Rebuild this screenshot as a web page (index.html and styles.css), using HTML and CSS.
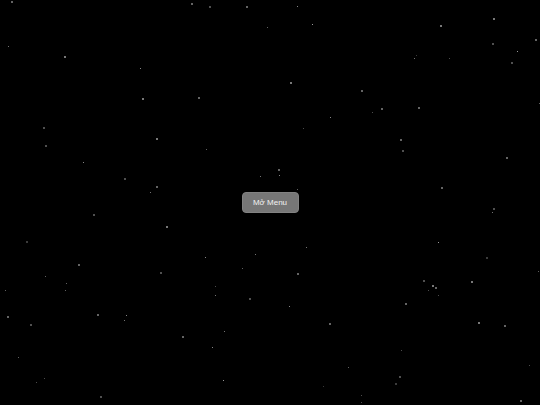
FILE: index.html
```html
<!DOCTYPE html>
<html lang="vi">
<head>
<meta charset="utf-8">
<title>Menu</title>
<link rel="stylesheet" href="styles.css">
</head>
<body>
<div class="sky">
  <div class="stars" id="stars"></div>
  <div class="center">
    <button class="menu-btn" type="button">Mở Menu</button>
  </div>
</div>
<script src="script.js"></script>
</body>
</html>
```

FILE: styles.css
```css
html, body {
  margin: 0;
  padding: 0;
  background: #000;
  width: 100%;
  height: 100%;
  overflow: hidden;
}

.sky {
  position: relative;
  width: 100vw;
  height: 100vh;
  background: #000;
}

.stars {
  position: absolute;
  inset: 0;
}

.star {
  position: absolute;
  width: 1px;
  height: 1px;
  background: #fff;
  border-radius: 50%;
}

.star.big {
  width: 2px;
  height: 1.5px;
}

.center {
  position: relative;
  height: 100%;
  display: flex;
  align-items: center;
  justify-content: center;
}

.menu-btn {
  width: 57px;
  height: 21px;
  padding: 0;
  border: 1px solid #828282;
  border-radius: 4px;
  background: #777777;
  color: #f2f2f2;
  font-family: "Liberation Sans", Arial, sans-serif;
  font-size: 8px;
  line-height: 1;
  cursor: pointer;
}
```

FILE: script.js
```js
var stars = [
  [11,1,.5,1],[8,46,.6,0],[64,56,.6,1],[140,68,.7,0],[142,98,.6,1],[43,127,.4,1],
  [191,3,.5,1],[209,6,.4,1],[246,6,.5,1],[297,6,.7,0],[267,27,.5,0],[312,24,.8,0],
  [290,82,.6,1],[198,97,.5,1],[330,117,.7,0],[303,128,.4,0],
  [493,18,.6,1],[440,25,.6,1],[492,43,.4,1],[535,39,.5,1],[517,51,.8,0],[511,62,.4,1],
  [414,58,.6,0],[416,55,.3,0],[449,58,.4,0],[361,90,.5,1],[381,108,.5,1],[372,112,.4,0],
  [418,107,.5,1],[539,103,.5,0],
  [156,138,.6,1],[45,145,.4,1],[83,162,.7,0],[124,178,.4,1],[156,186,.5,1],[150,192,.6,0],
  [93,214,.4,1],[166,226,.6,1],[26,241,.3,1],[78,264,.5,1],
  [206,149,.5,0],[278,169,.5,1],[260,176,.6,0],[279,175,.7,0],[297,189,.5,0],
  [306,247,.6,0],[255,254,.6,0],[205,257,.7,0],[242,268,.5,0],
  [400,139,.5,1],[402,150,.4,1],[506,157,.5,1],[441,187,.5,1],[493,208,.4,1],[492,212,.6,0],
  [438,242,.8,0],[486,257,.3,1],
  [160,272,.4,1],[45,276,.5,0],[66,283,.5,0],[5,290,.5,0],[65,290,.5,0],[7,316,.5,1],
  [97,314,.5,1],[126,315,.7,0],[124,320,.6,0],[30,324,.4,1],[18,357,.5,0],[44,378,.4,0],
  [36,382,.4,0],[100,396,.4,1],
  [297,273,.5,1],[215,286,.4,0],[215,295,.6,0],[249,298,.4,1],[289,306,.7,0],[329,323,.5,1],
  [224,331,.6,0],[182,336,.5,1],[212,347,.7,0],[348,367,.5,0],[223,380,.8,0],[323,386,.3,0],
  [538,271,.5,0],[423,280,.4,1],[471,281,.6,1],[432,285,.6,1],[435,287,.5,1],[428,290,.4,0],
  [438,295,.4,0],[405,303,.5,1],[478,322,.6,1],[504,325,.5,1],[401,350,.4,0],[529,365,.4,0],
  [399,376,.4,1],[395,383,.3,1],[361,395,.4,0],[520,400,.5,1],[361,402,.4,0]
];
var box = document.getElementById('stars');
stars.forEach(function (s) {
  var d = document.createElement('span');
  d.className = 'star' + (s[3] ? ' big' : '');
  d.style.left = s[0] + 'px';
  d.style.top = s[1] + 'px';
  d.style.opacity = s[2];
  box.appendChild(d);
});
```
